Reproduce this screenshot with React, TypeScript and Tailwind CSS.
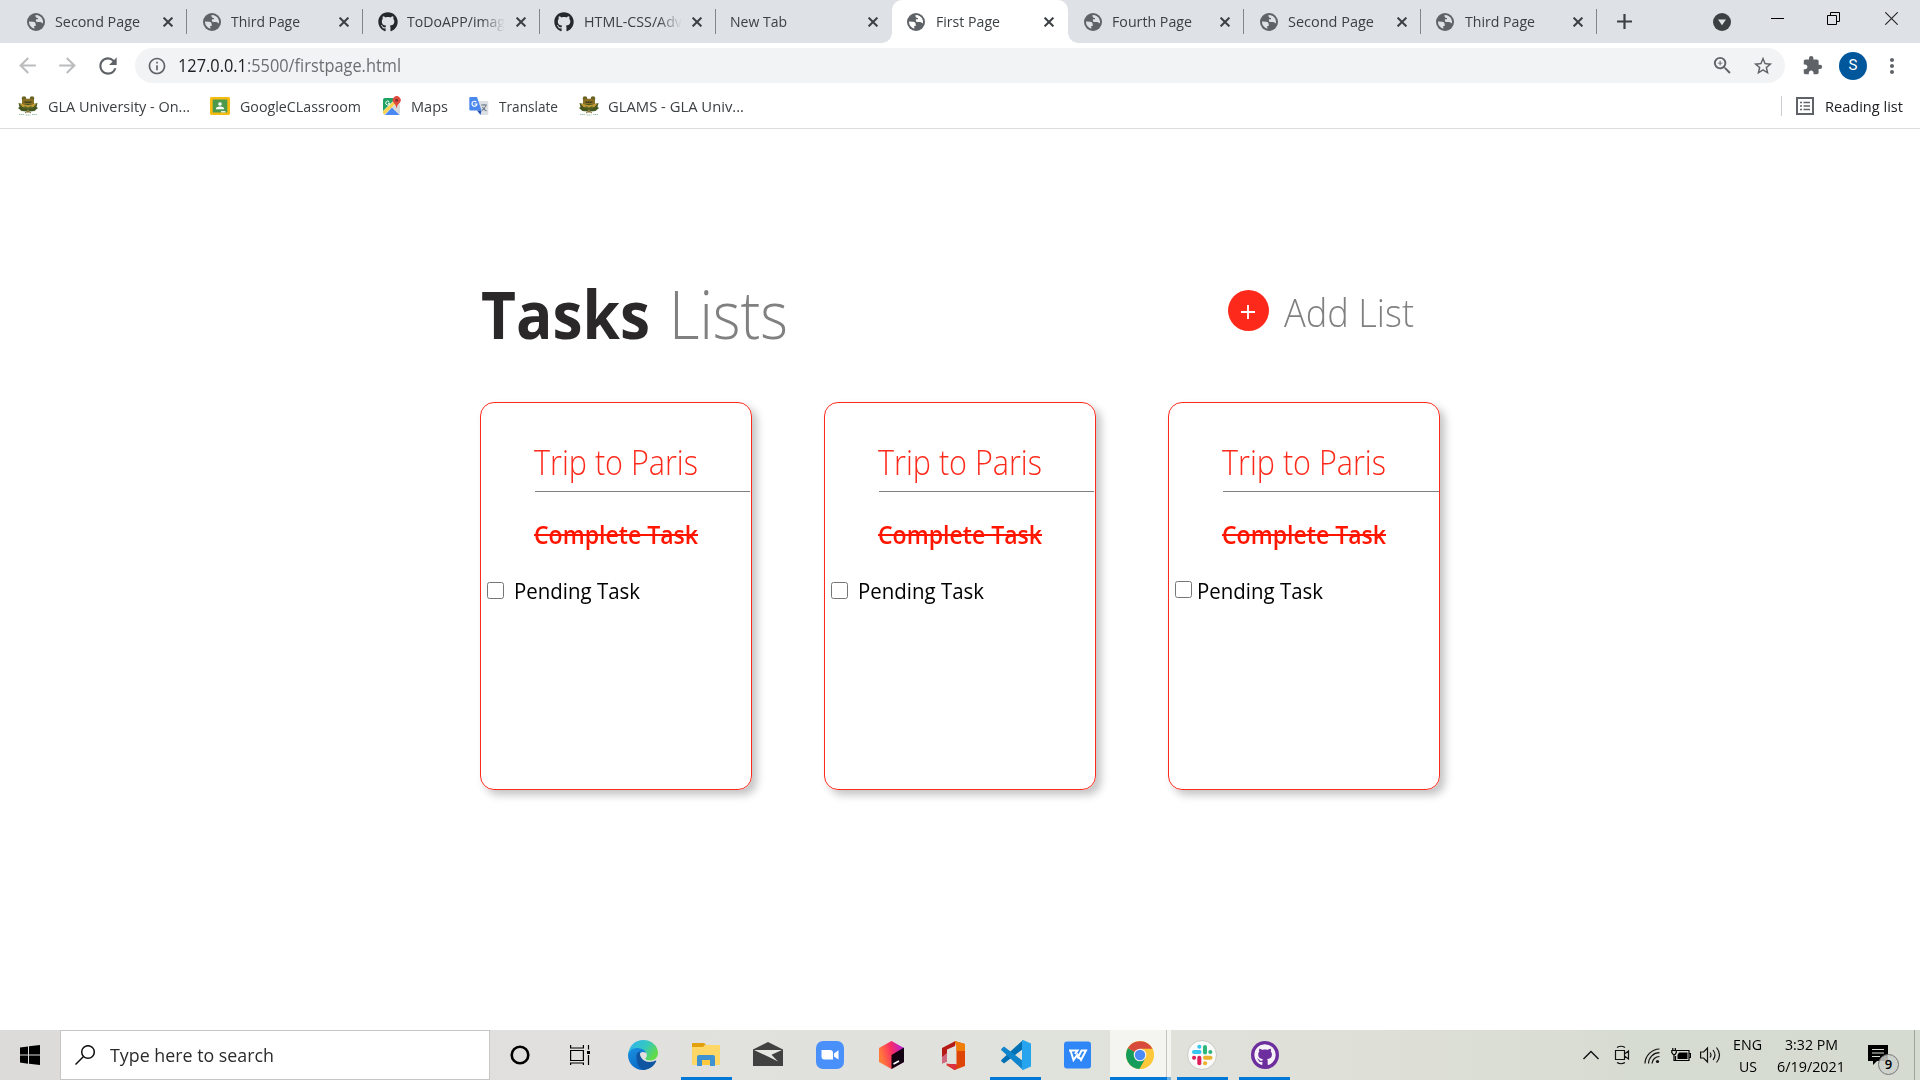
import React, { useLayoutEffect, useRef } from "react";
import { MdArrowBack, MdArrowForward, MdRefresh, MdInfoOutline, MdZoomIn, MdStarBorder, MdExtension, MdMoreVert } from "react-icons/md";
import { FaGithub } from "react-icons/fa";

/* Single line of text condensed or stretched to a given advance width. */
function T({ w, className = "", children }: { w: number; className?: string; children: React.ReactNode }) {
  const ref = useRef<HTMLSpanElement>(null);
  useLayoutEffect(() => {
    const el = ref.current;
    if (!el) return;
    el.style.transform = "none";
    const natural = el.getBoundingClientRect().width;
    if (natural > 0) el.style.transform = `scaleX(${w / natural})`;
  }, [w]);
  return (
    <span className={`block shrink-0 whitespace-nowrap ${className}`} style={{ width: w }}>
      <span ref={ref} className="inline-block origin-left">
        {children}
      </span>
    </span>
  );
}

function Cross() {
  return (
    <svg className="h-[10px] w-[10px]" viewBox="0 0 10 10" stroke="#3c4043" strokeWidth="2">
      <path d="M.6.6l8.8 8.8M9.4.6L.6 9.4" />
    </svg>
  );
}

function Globe({ active }: { active?: boolean }) {
  return (
    <svg className="ml-[15.500px] h-[18px] w-[18px]" viewBox="0 0 18 18">
      <circle cx="9" cy="9" r="9" fill="#5f6368" />
      <g fill={active ? "#fff" : "#dee1e6"}>
        <path d="M9 2Q13 2.200 15 5.300q1.300 2.200.9 5-1.200.200-1.600-1L12.800 9H10.500Q9 9 8.800 7.500L9 6.300h2L11 5H9.500L9 3.500H8.200Q8 2.500 9 2z" />
        <path d="M2 8.500l4 .2q2.700.100 2.700 2.800v1.500H7.200L7.400 15.800Q2.600 14 2 9.500z" />
      </g>
    </svg>
  );
}

type TabInfo = { title: string; w: number; icon: "globe" | "github" | "none"; active?: boolean; fade?: boolean; sep?: boolean };

const tabs: TabInfo[] = [
  { title: "Second Page", w: 85, icon: "globe", sep: true },
  { title: "Third Page", w: 69, icon: "globe", sep: true },
  { title: "ToDoAPP/imag", w: 98, icon: "github", fade: true, sep: true },
  { title: "HTML-CSS/Adv", w: 98, icon: "github", fade: true, sep: true },
  { title: "New Tab", w: 57, icon: "none" },
  { title: "First Page", w: 64, icon: "globe", active: true },
  { title: "Fourth Page", w: 80, icon: "globe", sep: true },
  { title: "Second Page", w: 86, icon: "globe", sep: true },
  { title: "Third Page", w: 70, icon: "globe", sep: true },
];

function Tab({ t }: { t: TabInfo }) {
  return (
    <div className={`relative flex h-[43px] w-[176.2px] shrink-0 items-center ${t.active ? "rounded-t-[10px] bg-white" : ""}`}>
      {t.active && (
        <>
          <div className="absolute -left-[10px] bottom-0 h-[10px] w-[10px] bg-[radial-gradient(circle_at_0_0,#dee1e6_9.5px,#fff_10px)]" />
          <div className="absolute -right-[10px] bottom-0 h-[10px] w-[10px] bg-[radial-gradient(circle_at_100%_0,#dee1e6_9.5px,#fff_10px)]" />
        </>
      )}
      {t.icon === "globe" && <Globe active={t.active} />}
      {t.icon === "github" && <FaGithub className="ml-[14.5px] h-[20px] w-[20px] text-[#24292e]" />}
      <div className={`text-[#3c4043] ${t.icon === "none" ? "ml-[14.5px]" : t.icon === "github" ? "ml-[9.5px]" : "ml-[10.5px]"} ${t.fade ? "w-[98px] [mask-image:linear-gradient(90deg,#000_75%,transparent)]" : ""}`}>
        <T w={t.w} className="-mt-px text-[15px] leading-5">{t.title}</T>
      </div>
      <div className="mr-[14px] ml-auto">
        <Cross />
      </div>
      {t.sep && <div className="absolute top-[9px] right-0 h-[25px] w-px bg-[#80868b]" />}
    </div>
  );
}

function Frog() {
  return (
    <svg className="h-5 w-5 shrink-0" viewBox="0 0 20 20">
      <circle cx="6" cy="2.600" r="2.300" fill="#6b6424" />
      <circle cx="14" cy="2.600" r="2.300" fill="#6b6424" />
      <path d="M4 4q6-2.500 12 0v4H4z" fill="#8b6f22" />
      <path d="M6 5.500h8l-1 1.500H7z" fill="#3f4620" />
      <path d="M.5 7l4 1h11l4-1-1 4 1.500 1-3.500 3-5 .5L10 14l-1.500 1.500-5-.5L0 12l1.500-1z" fill="#46571f" />
      <path d="M1.500 7.500l4 .8 4.500 1 4.500-1 4-.8-3 3.500-5.500 1-5.500-1z" fill="#c69a35" />
      <path d="M6 9.500l4 2 4-2-1.500 3h-5z" fill="#5a6a28" />
      <path d="M10 13v4M7 17l3-2 3 2" stroke="#7b6a2b" fill="none" />
      <path d="M1 18.500h5M7.500 19h5M14 18.500h5" stroke="#9dc0a6" strokeDasharray="1.500 .6" />
    </svg>
  );
}

function Classroom() {
  return (
    <svg className="h-5 w-5 shrink-0" viewBox="0 0 20 20">
      <rect x="0" y="1" width="20" height="18" rx="1.4" fill="#f7bb10" />
      <rect x="2.7" y="3.5" width="14.6" height="13" fill="#4d9a4c" />
      <circle cx="10" cy="8" r="1.8" fill="#fff" />
      <path d="M5.8 13.2q0-2.8 4.2-2.8t4.2 2.8z" fill="#fff" />
      <path d="M11 16.5h4.5V15H11z" fill="#e8eee8" />
    </svg>
  );
}

function Maps() {
  return (
    <svg className="h-5 w-5 shrink-0" viewBox="0 0 20 20">
      <rect x="1" y="2" width="17" height="17" rx="2" fill="#e6e6e6" />
      <path d="M3 2h11L1 15V4q0-2 2-2z" fill="#1ea362" />
      <path d="M1 15.500L14 3l2 2L2.500 18.500Q1 18 1 16z" fill="#fcd24a" />
      <path d="M3 19l7-7.500 7.500 7.500z" fill="#4a89f3" />
      <path d="M10 11.500l8 7.500V9l-3-2z" fill="#dadada" />
      <path d="M14.500 12.500Q14 8.500 11.500 6.500a4 4 0 1 1 6.400 0Q15 8.500 14.500 12.500z" fill="#dd4b3e" />
      <circle cx="14.700" cy="4.300" r="1.400" fill="#822f2b" />
      <path d="M7.300 5.800a2 2 0 1 0 .5 1.500H6" stroke="#fff" fill="none" />
    </svg>
  );
}

function Translate() {
  return (
    <svg className="h-5 w-5 shrink-0" viewBox="0 0 20 20">
      <path d="M8 5h10q1.300 0 1.300 1.300v11.400Q19.300 19 18 19h-6z" fill="#dcdfe3" />
      <path d="M1.500 1H8l4.500 13.500H1.500Q.3 14.500.3 13.200V2.300Q.3 1 1.500 1z" fill="#4a87ee" />
      <path d="M8 14.500h4.500L11.500 19z" fill="#2451b2" />
      <path d="M7.300 6a2.500 2.500 0 1 0 .7 2H5.500" stroke="#fff" strokeWidth="1.200" fill="none" />
      <path d="M12 9h6M15 8v1.500M17 9q-.8 3.500-4 5.500M13.500 11q1.500 3 4 4" stroke="#6f7c88" strokeWidth="1.100" fill="none" />
    </svg>
  );
}

function BrowserChrome() {
  return (
    <header className="text-[#3c4043]">
      <div className="flex h-[43px] bg-[#dee1e6] pl-[11px]">
        {tabs.map((t, i) => (
          <Tab key={i} t={t} />
        ))}
        <svg className="mt-[14px] ml-[20px] h-[15px] w-[15px]" viewBox="0 0 15 15" stroke="#3c4043" strokeWidth="2.200">
          <path d="M7.500 0v15M0 7.500h15" />
        </svg>
        <svg className="mt-[13px] ml-[81px] h-[18px] w-[18px]" viewBox="0 0 18 18">
          <circle cx="9" cy="9" r="9" fill="#3c4043" />
          <path d="M5 6.500h8L9 12.300z" fill="#dee1e6" />
        </svg>
        <div className="ml-auto flex h-[37px] items-center gap-[43px] pr-[22px]">
          <div className="h-px w-[13px] bg-black" />
          <svg className="h-[13px] w-[13px]" viewBox="0 0 13 13" fill="none" stroke="#000">
            <path d="M.5 3.500h9v9h-9zM3.500 3.500v-3h9v9h-3" />
          </svg>
          <svg className="ml-[2px] h-[13px] w-[13px]" viewBox="0 0 13 13" stroke="#222" strokeWidth="1.100">
            <path d="M.3.300l12.400 12.400M12.700.300L.3 12.700" />
          </svg>
        </div>
      </div>
      <div className="flex h-[45px] items-center bg-white pl-[15px]">
        <MdArrowBack className="h-[25px] w-[25px] text-[#babcbe]" />
        <MdArrowForward className="ml-[15px] h-[25px] w-[25px] text-[#babcbe]" />
        <MdRefresh className="ml-[15px] h-[26px] w-[26px] text-[#5f6368]" />
        <div className="ml-[14px] flex h-[35px] w-[1650px] items-center rounded-full bg-[#f1f3f4] pl-[12px]">
          <MdInfoOutline className="h-[20px] w-[20px] text-[#5f6368]" />
          <T w={223} className="mt-[-2px] ml-[11px] text-[18px] leading-6 text-[#6b6f73]">
            <span className="text-[#202124]">127.0.0.1</span>:5500/firstpage.html
          </T>
          <MdZoomIn className="ml-auto h-[23px] w-[23px] text-[#5f6368]" />
          <MdStarBorder className="mr-[11px] ml-[18px] h-[22px] w-[22px] text-[#5f6368]" />
        </div>
        <MdExtension className="ml-[17px] h-[21px] w-[21px] text-[#5f6368]" />
        <div className="ml-[16px] flex h-[28px] w-[28px] items-center justify-center rounded-full bg-[#01579b] font-[Roboto] text-[15px] text-white">S</div>
        <MdMoreVert className="ml-[13px] h-[24px] w-[24px] text-[#5f6368]" />
      </div>
      <div className="flex h-[41px] items-center border-b border-[#dadce0] bg-white pb-[5px] pl-[18px] text-[15px] leading-5">
        <Frog />
        <T w={142} className="ml-[9.500px]">GLA University - On...</T>
        <div className="ml-[20.500px]"><Classroom /></div>
        <T w={121} className="ml-[9.500px]">GoogleCLassroom</T>
        <div className="ml-[21px]"><Maps /></div>
        <T w={37} className="ml-[9.500px]">Maps</T>
        <div className="ml-[21px]"><Translate /></div>
        <T w={59} className="ml-[10px]">Translate</T>
        <div className="ml-[21px]"><Frog /></div>
        <T w={136} className="ml-[9px]">GLAMS - GLA Univ...</T>
        <div className="ml-auto h-[20px] w-px bg-[#c9ccd0]" />
        <svg className="ml-[14px] h-[18px] w-[18px]" viewBox="0 0 18 18" fill="none" stroke="#5f6368">
          <path d="M1 1h16v16H1z" strokeWidth="2" />
          <path d="M4 5.500h2M4 9h2M4 12.500h2M7.500 5.500H14M7.500 9H14M7.500 12.500H14" strokeWidth="1.500" />
        </svg>
        <T w={78} className="mr-[17px] ml-[11px] text-[#202124]">Reading list</T>
      </div>
    </header>
  );
}

function Card({ last }: { last?: boolean }) {
  return (
    <section className="h-[388px] w-[272px] rounded-[14px] border border-[#fd2a1b] shadow-[5px_5px_8px_#c4c4c4]">
      <T w={164} className="mt-[36px] ml-[53px] text-[34px] leading-[46px] font-light text-[#fd2a1b]">Trip to Paris</T>
      <div className={`mt-[6px] ml-[54px] h-px bg-[#808080] ${last ? "w-[216px]" : "w-[215px]"}`} />
      <div className="relative mt-[25px] ml-[53px] w-[164px]">
        <T w={164} className="text-[25.500px] leading-[34px] font-semibold text-[#ff1500]">Complete Task</T>
        <div className="absolute top-[17px] left-0 h-[2px] w-full bg-[#ff1500]" />
      </div>
      <div className="mt-[26px] flex items-start">
        <input type="checkbox" className={`ml-[6px] h-[17px] w-[17px] ${last ? "mt-[4px]" : "mt-[5px]"}`} />
        <T w={126} className={`text-[22px] leading-[27px] text-black ${last ? "ml-[5px]" : "ml-[10px]"}`}>Pending Task</T>
      </div>
    </section>
  );
}

function Slot({ w, run, children }: { w: number; run?: boolean; children: React.ReactNode }) {
  return (
    <div className="relative flex h-[50px] shrink-0 items-center justify-center" style={{ width: w }}>
      {children}
      {run && <div className="absolute bottom-0 left-[5px] h-[3px] w-[51px] bg-[#0078d7]" />}
    </div>
  );
}

function Taskbar() {
  return (
    <footer className="flex h-[50px] bg-[linear-gradient(90deg,#dcdbd9_0%,#e1e0de_30%,#e0e2dc_55%,#dfe0d8_70%,#d7dcd2_85%,#d5dbd1_100%)] text-black">
      <div className="flex w-[60px] items-center justify-center">
        <svg className="h-5 w-5" viewBox="0 0 20 20">
          <path d="M0 2.600l8-1.100v8H0zM9 1.300L20 0v9.500H9zM0 10.500h8v8.200l-8-1.100zM9 10.500h11V20L9 18.800z" />
        </svg>
      </div>
      <div className="flex w-[430px] items-center border border-[#c6c6c6] bg-white pl-[14px]">
        <svg className="h-5 w-5" viewBox="0 0 20 20" fill="none" stroke="#111" strokeWidth="1.500">
          <circle cx="13" cy="7" r="6.300" />
          <path d="M8.500 11.500L.5 19.500" />
        </svg>
        <T w={164} className="ml-[15px] text-[18.500px] leading-6 text-[#2b2b2b]">Type here to search</T>
      </div>
      <Slot w={60}>
        <svg className="h-5 w-5" viewBox="0 0 20 20"><circle cx="10" cy="10" r="8.300" fill="none" stroke="#000" strokeWidth="2.600" /></svg>
      </Slot>
      <Slot w={60}>
        <svg className="h-5 w-5" viewBox="0 0 20 20" fill="none" stroke="#000" strokeWidth="1.200">
          <path d="M.6 5.500h12.800v10H.6zM.6 0v3h12.800V0M.6 20v-2h12.800v2M18.500 0v4.500M18.500 10v10" />
          <path d="M17 6h3v3h-3z" fill="#000" stroke="none" />
        </svg>
      </Slot>
      <Slot w={66}>
        <svg className="mr-[-2px] h-[30px] w-[30px] -translate-x-[1px]" viewBox="0 0 30 30">
          <defs>
            <linearGradient id="eTop" x1="0" y1="0" x2="1" y2=".5"><stop offset=".1" stopColor="#2fb4ea" /><stop offset=".6" stopColor="#35c8c0" /><stop offset="1" stopColor="#62da4a" /></linearGradient>
            <linearGradient id="eLeft" x1="0" y1="0" x2=".6" y2="1"><stop offset="0" stopColor="#1a93e2" /><stop offset="1" stopColor="#0a66c4" /></linearGradient>
          </defs>
          <path d="M0 15C1 5 8 0 15 0c9 0 15 6 15 13 0 5-4 7.500-8 7.500-3 0-5-1-4.500-2 3-3 1-8-4-8.500C7 9 2 12 0 15z" fill="url(#eTop)" />
          <path d="M0 15c1-5 6-8 12-6.500 3 .5 5.500 2 6 4.500-4-2.500-7.500.500-7.500 4.500 0 5 4 10 10 10.500C18 29.500 16 30 15 30 6 30 0 23 0 15z" fill="url(#eLeft)" />
          <path d="M8.500 17c-.5-3 1-5 3.500-5.500-1 6 4 10.500 9.500 10.500 3 0 5-1 6-1.500.600-.300 1 .100.700.700C26 26 21 30 15 30c-4-2-6.500-7-6.500-13z" fill="#0f55a2" />
        </svg>
      </Slot>
      <Slot w={61} run>
        <svg className="mr-[2px] mb-[1px] h-[24px] w-[28px]" viewBox="0 0 28 24">
          <path d="M0 1q0-1 1-1h11l2 2h-1l-2 3H0z" fill="#e2a00c" />
          <path d="M0 4h11l2-2h14q1 0 1 1v18q0 1-1 1H1q-1 0-1-1z" fill="#ffd766" />
          <path d="M5 14q0-2 2-2h14q2 0 2 2v9h-5v-6h-8v6H5z" fill="#3f92d2" />
          <path d="M10 17h8v5h-8z" fill="#ffc93f" />
        </svg>
      </Slot>
      <Slot w={62}>
        <svg className="mb-[2px] h-[24px] w-[30px]" viewBox="0 0 30 24">
          <path d="M0 7.500L15 0l15 7.500V24H0z" fill="#414141" />
          <path d="M1 8h28l-10.500 4.800 6.500 6.700-10-5z" fill="#e6e6e3" />
        </svg>
      </Slot>
      <Slot w={62}>
        <svg className="h-[28px] w-[28px]" viewBox="0 0 28 28">
          <rect width="28" height="28" rx="7" fill="#4a90fb" />
          <path d="M5.500 9H14q3 0 3 3v6.500H8.500q-3 0-3-3zM18 12.500L22.500 9.200v9.300L18 15.500z" fill="#fff" />
        </svg>
      </Slot>
      <Slot w={62}>
        <svg className="mr-[1px] h-[28px] w-[25px]" viewBox="0 0 25 28">
          <defs><linearGradient id="cube" x1="0" y1=".3" x2="1" y2="0"><stop offset="0" stopColor="#ff7b3a" /><stop offset=".45" stopColor="#fb2e62" /><stop offset="1" stopColor="#a81bf0" /></linearGradient></defs>
          <path d="M12.500 0L25 7v14l-12.500 7L0 21V7z" fill="url(#cube)" />
          <path d="M12.500 14L25 6.500V21l-12.500 7z" fill="#130212" />
          <path d="M14.500 23l5.500-3" stroke="#fff" strokeWidth="1.700" />
        </svg>
      </Slot>
      <Slot w={62}>
        <svg className="mr-[1px] h-[29px] w-[23px]" viewBox="0 0 23 29">
          <path d="M0 7L13 .300V5L5 8.500v12L0 22.500z" fill="#b51a16" />
          <path d="M0 16l5-4v8.500L0 22.500z" fill="#d06a83" />
          <path d="M4 22.500l9 1V29z" fill="#e33440" />
          <path d="M12.500 0L23 3v22l-10.500 4-8.500-5 10.500 0V5.500z" fill="#de4406" />
          <path d="M12.500 0L23 3v7h-8.500V5.500z" fill="#ef7d06" />
          <path d="M4 23h10.500V28l-2 1z" fill="#db3140" />
        </svg>
      </Slot>
      <Slot w={61} run>
        <svg className="h-[30px] w-[30px]" viewBox="0 0 30 30">
          <path d="M22 0v9L3 23.500l-2.500-2.300q-.6-.7 0-1.500z" fill="#0070b5" />
          <path d="M22 30v-9L3 6.500.500 8.800q-.6.700 0 1.500z" fill="#1185cc" />
          <path d="M22 0l8 3.500v23L22 30q-.8-.3-1-1V1z" fill="#26a5ee" />
        </svg>
      </Slot>
      <Slot w={63}>
        <svg className="h-[28px] w-[28px]" viewBox="0 0 28 28">
          <rect y=".5" width="27" height="27" rx="3" fill="#2f86f7" />
          <path d="M5 9.500h8.500L11 13M6.500 9.500l3 9.500 4-5.500 3.500 5.500 5-9.500h-4.500l-4 8" stroke="#fff" strokeWidth="2" fill="none" />
        </svg>
      </Slot>
      <div className="relative ml-[1px] flex w-[61px] items-center bg-[#f4f4f1] pl-[16px]">
        <svg className="h-[28px] w-[28px]" viewBox="0 0 28 28">
          <circle cx="14" cy="14" r="14" fill="#fdc93b" />
          <path d="M14 14L1.900 7A14 14 0 0 0 13.500 28l6-10.500z" fill="#149c5a" />
          <path d="M14 14L1.900 7A14 14 0 0 1 26.500 8H14z" fill="#d84a3c" />
          <path d="M14 7.700h12.300A14 14 0 0 1 13.500 28l6-10.500z" fill="#fdc93b" />
          <circle cx="14" cy="14" r="6.300" fill="#f4f4f1" />
          <circle cx="14" cy="14" r="5.200" fill="#4c8bf5" />
        </svg>
        <div className="absolute top-0 right-[4px] h-full w-px bg-[#c4c4c2]" />
        <div className="absolute bottom-0 left-0 h-[3px] w-[57px] bg-[#0078d7]" />
        <div className="absolute right-0 bottom-0 h-[3px] w-[4px] bg-[#6aaee4]" />
      </div>
      <div className="w-px" />
      <Slot w={61} run>
        <svg className="mr-[2px] h-[30px] w-[30px]" viewBox="0 0 30 30">
          <circle cx="15" cy="15" r="14.500" fill="#fafafa" stroke="#c9c9c5" />
          <g strokeWidth="4" strokeLinecap="round">
            <path d="M7 12h5.500" stroke="#36c5f0" /><path d="M12.300 6.700h.1" stroke="#36c5f0" />
            <path d="M18 7v5.500" stroke="#2eb67d" /><path d="M23.300 12h.1" stroke="#2eb67d" />
            <path d="M18 17.800h5.500" stroke="#ecb22e" /><path d="M18 23.200h.1" stroke="#ecb22e" />
            <path d="M12.300 17.800v5.500" stroke="#e01e5a" /><path d="M7 17.800h.1" stroke="#e01e5a" />
          </g>
        </svg>
      </Slot>
      <div className="w-px" />
      <Slot w={61} run>
        <div className="flex h-[28px] w-[28px] items-center justify-center rounded-full bg-[#6e2f9e]">
          <FaGithub className="h-[22px] w-[22px] rounded-full text-[#f6f2f8]" />
        </div>
      </Slot>
      <div className="ml-auto flex items-center">
        <svg className="h-[10px] w-[16px]" viewBox="0 0 16 10" fill="none" stroke="#111" strokeWidth="1.400"><path d="M.5 9L8 1.500 15.500 9" /></svg>
        <svg className="ml-[15px] h-[20px] w-[16px]" viewBox="0 0 16 20" fill="none" stroke="#111" strokeWidth="1.200">
          <path d="M1.500 5.500h9v9h-9zM10.500 9l4-3v8l-4-3M3 2.500q4-2.500 8 0M3 17.500q4 2.500 8 0" />
        </svg>
        <svg className="ml-[14px] h-[17px] w-[16px]" viewBox="0 0 16 17" fill="none" stroke="#111" strokeWidth="1.200">
          <path d="M1 16.500A15 15 0 0 1 15.500 2M4.500 16.500A11 11 0 0 1 15.500 5.700M8 16.500a7.500 7.500 0 0 1 7.500-7" />
          <circle cx="13.500" cy="14.500" r="1.600" fill="#111" stroke="none" />
        </svg>
        <svg className="ml-[11px] h-[14px] w-[20px]" viewBox="0 0 20 14" fill="none" stroke="#000" strokeWidth="1.200">
          <path d="M6 2.500h12v10H4.500V8M18.500 5.500h1v4h-1" /><path d="M8 4.500h8.500v6.500H6.500V7z" fill="#000" stroke="none" />
          <path d="M.8 2.500h4.500v2L4 6.500H2.200L.8 4.500zM1.800 0v2.500M4.300 0v2.500M3 6v6.500h2" />
        </svg>
        <svg className="ml-[9px] h-[18px] w-[21px]" viewBox="0 0 21 18" fill="none" stroke="#111" strokeWidth="1.200">
          <path d="M.6 6h3L7.500 2v14L3.600 12h-3zM10 6.500q2 2.500 0 5M13 4q4 5 0 10M16.500 1.500q6 7.500 0 15" />
        </svg>
        <div className="ml-[12px] flex w-[29px] flex-col items-center text-[15px] leading-[22px]">
          <T w={29}>ENG</T>
          <T w={18}>US</T>
        </div>
        <div className="ml-[15px] flex w-[68px] flex-col items-center text-[15px] leading-[22px]">
          <T w={53}>3:32 PM</T>
          <T w={68}>6/19/2021</T>
        </div>
        <div className="relative ml-[23px] h-[50px] w-[46px]">
          <svg className="mt-[15px] h-[20px] w-[20px]" viewBox="0 0 20 20">
            <path d="M0 0h20v16H9l-4 4v-4H0z" />
            <path d="M4 4.500h12M4 8h12M4 11.500h8" stroke="#d9ded5" strokeWidth="1.200" />
          </svg>
          <div className="absolute top-[24px] left-[10px] flex h-[21px] w-[21px] items-center justify-center rounded-full border border-[#777] bg-[#cdd0cb]/85 text-[13px] font-semibold">9</div>
        </div>
        <div className="h-[50px] w-px bg-[#9fa39c]" />
        <div className="w-[5px]" />
      </div>
    </footer>
  );
}

export default function App() {
  return (
    <div className="flex h-[1080px] w-[1920px] flex-col overflow-hidden bg-white font-['Open_Sans','Noto_Sans',sans-serif]">
      <BrowserChrome />
      <main className="h-[901px] bg-white pl-[480px]">
        <div className="flex h-[273px] pt-[138px]">
          <T w={169} className="ml-[1px] text-[67px] leading-[92px] font-bold text-[#2a2829]">Tasks</T>
          <T w={119} className="ml-[19px] text-[67px] leading-[92px] font-light text-[#808080]">Lists</T>
          <div className="mt-[23px] ml-[440px] flex h-[41px] w-[41px] items-center justify-center rounded-full bg-[#fd2a1b]">
            <svg className="mt-[3px] mr-px h-[14px] w-[14px]" viewBox="0 0 14 14" stroke="#fff" strokeWidth="1.800"><path d="M7 0v14M0 7h14" /></svg>
          </div>
          <T w={130} className="mt-[19px] ml-[15px] text-[39px] leading-[52px] font-light text-[#808080]">Add List</T>
        </div>
        <div className="flex gap-[72px]">
          <Card />
          <Card />
          <Card last />
        </div>
      </main>
      <Taskbar />
    </div>
  );
}
